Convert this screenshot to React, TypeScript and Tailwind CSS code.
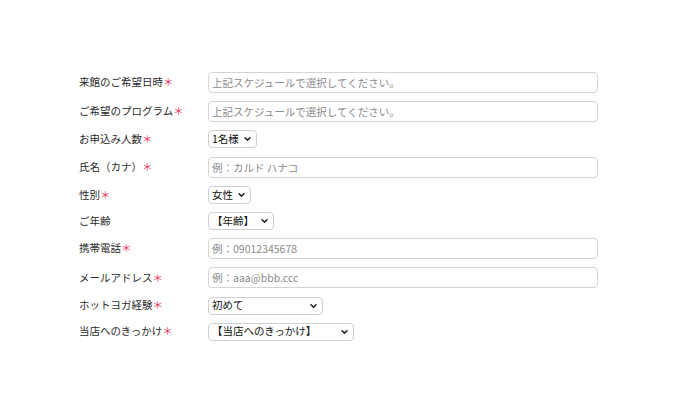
import React from 'react'

type Row =
  | { label: string; required: boolean; kind: 'input'; placeholder: string }
  | { label: string; required: boolean; kind: 'select'; value: string; width: string }

const rows: Row[] = [
  { label: '来館のご希望日時', required: true, kind: 'input', placeholder: '上記スケジュールで選択してください。' },
  { label: 'ご希望のプログラム', required: true, kind: 'input', placeholder: '上記スケジュールで選択してください。' },
  { label: 'お申込み人数', required: true, kind: 'select', value: '1名様', width: 'w-[49px]' },
  { label: '氏名（カナ）', required: true, kind: 'input', placeholder: '例：カルド ハナコ' },
  { label: '性別', required: true, kind: 'select', value: '女性', width: 'w-[43px]' },
  { label: 'ご年齢', required: false, kind: 'select', value: '【年齢】', width: 'w-[66px]' },
  { label: '携帯電話', required: true, kind: 'input', placeholder: '例：09012345678' },
  { label: 'メールアドレス', required: true, kind: 'input', placeholder: '例：aaa@bbb.ccc' },
  { label: 'ホットヨガ経験', required: true, kind: 'select', value: '初めて', width: 'w-[115px]' },
  { label: '当店へのきっかけ', required: true, kind: 'select', value: '【当店へのきっかけ】', width: 'w-[146px]' },
]

// small select arrow
function Chevron() {
  return (
    <svg width="7" height="5" viewBox="0 0 7 5" className="pointer-events-none absolute right-[6px] top-1/2 -translate-y-1/2">
      <path d="M1 1.2 L3.5 3.6 L6 1.2" fill="none" stroke="#222" strokeWidth="1.5" strokeLinecap="round" strokeLinejoin="round" />
    </svg>
  )
}

export default function App() {
  return (
    <div className="w-[680px] h-[400px] bg-white text-[#2a2a2a] [font-family:'Noto_Sans_CJK_JP',sans-serif]">
      <form className="pt-[72px] pl-[79px] flex flex-col gap-[8.2px]">
        {rows.map((row, i) => (
          <div key={i} className="flex items-center">
            <label className="w-[129px] text-[10.5px] leading-none flex items-center">
              {row.label}
              {row.required && <span className="text-[#e8385f]">＊</span>}
            </label>
            {row.kind === 'input' ? (
              <input
                type="text"
                placeholder={row.placeholder}
                className="block w-[390px] h-[21px] border border-[#d4d4d4] rounded-[4px] px-[3px] text-[10.5px] text-[#333] placeholder:text-[#8a8a8a] outline-none"
              />
            ) : (
              <div className={`relative ${row.width}`}>
                <select
                  defaultValue={row.value}
                  className="block w-full h-[18px] appearance-none border border-[#cfcfcf] rounded-[4px] pl-[3px] pr-[14px] text-[10.5px] leading-none text-[#111] bg-white outline-none"
                >
                  <option>{row.value}</option>
                </select>
                <Chevron />
              </div>
            )}
          </div>
        ))}
      </form>
    </div>
  )
}
